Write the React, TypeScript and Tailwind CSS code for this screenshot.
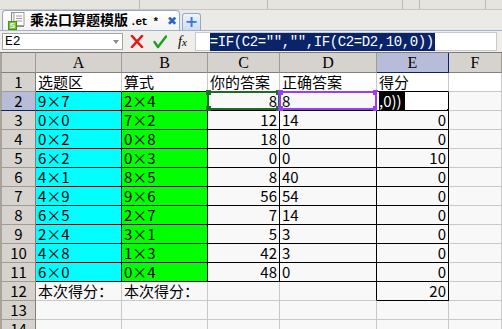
import React from "react";

const colA = ["9×7", "0×0", "0×2", "6×2", "4×1", "4×9", "6×5", "2×4", "4×8", "6×0"];
const colB = ["2×4", "7×2", "0×8", "0×3", "8×5", "9×6", "2×7", "3×1", "1×3", "0×4"];
const colC = ["8", "12", "18", "0", "8", "56", "7", "5", "42", "48"];
const colD = ["8", "14", "0", "0", "40", "54", "14", "3", "3", "0"];
const colE = ["", "0", "0", "10", "0", "0", "0", "0", "0", "0"];

const cellFont = { fontFamily: '"Noto Sans CJK SC", "Noto Sans", sans-serif' };

function Cell({
	children,
	className = "",
}: {
	children?: React.ReactNode;
	className?: string;
}) {
	return (
		<div
			className={`relative flex items-end whitespace-nowrap border-r border-b px-[2px] text-[15px] leading-[18px] text-black ${className}`}
			style={cellFont}
		>
			{children}
		</div>
	);
}

function RowHead({ n, active }: { n: number; active?: boolean }) {
	return (
		<div
			className={`flex items-center justify-center border-l-2 border-r border-b border-l-[#a8a49c] text-[15px] leading-[18px] text-black ${
				active
					? "bg-[#b7bcd9] border-b-[#0a246a] border-r-[#808080]"
					: "bg-[#d6d3ce] border-b-[#a09c94] border-r-[#808080]"
			}`}
			style={cellFont}
		>
			{n}
		</div>
	);
}

function ColHead({ label, active }: { label: string; active?: boolean }) {
	return (
		<div
			className={`flex items-end justify-center border-r border-b text-[16px] leading-[19px] text-black ${
				active
					? "bg-[#b7bcd9] border-r-[#0a246a] border-b-[#0a246a]"
					: "bg-[#d6d3ce] border-r-[#a09c94] border-b-[#808080]"
			}`}
			style={{ fontFamily: '"Liberation Serif", serif' }}
		>
			{label}
		</div>
	);
}

function Handles({ color }: { color: string }) {
	const dot = `absolute h-[5px] w-[5px] ${color}`;
	return (
		<>
			<span className={`${dot} -left-[3px] -top-[3px]`} />
			<span className={`${dot} -right-[3px] -top-[3px]`} />
			<span className={`${dot} -left-[3px] -bottom-[3px]`} />
			<span className={`${dot} -right-[3px] -bottom-[3px]`} />
		</>
	);
}

function SheetIcon() {
	return (
		<svg width="18" height="18" viewBox="0 0 18 18" className="shrink-0">
			<rect x="3.5" y="0.5" width="12" height="14" fill="#f4f4f4" stroke="#8a8a8a" />
			<rect x="6" y="0.5" width="10" height="13" fill="#fff" stroke="#9a9a9a" />
			<line x1="8" y1="4" x2="14" y2="4" stroke="#9a9a9a" />
			<line x1="8" y1="6.5" x2="14" y2="6.5" stroke="#9a9a9a" />
			<line x1="8" y1="9" x2="14" y2="9" stroke="#9a9a9a" />
			<rect x="0.5" y="9.5" width="8" height="8" fill="#7ac231" stroke="#4f8f1c" />
			<text x="4.5" y="16.3" fontSize="8" fontWeight="bold" textAnchor="middle" fill="#fff" fontFamily="Liberation Sans, sans-serif">
				S
			</text>
		</svg>
	);
}

export default function App() {
	const rows = Array.from({ length: 10 }, (_, i) => i);

	return (
		<div className="h-[329px] w-[502px] overflow-hidden bg-[#f7f7f7]">
			{/* toolbar remnant */}
			<div className="flex h-[10px] border-b border-[#c9c6bd] bg-[#e6e4de]">
				<div className="w-[140px] border-r border-[#bdbab2]" />
				<div className="w-[128px] border-r border-[#bdbab2]" />
				<div className="w-[135px] border-r border-[#bdbab2]" />
				<div className="w-[17px] border-r border-[#bdbab2]" />
				<div className="w-[66px] border-r border-[#bdbab2]" />
			</div>

			{/* tab bar */}
			<div className="flex h-[21px] items-end border-b border-[#9fb2cf] bg-[#ebeae6] pl-[2px]">
				<div className="flex h-[20px] w-[178px] items-center gap-[4px] whitespace-nowrap rounded-t-[4px] border border-b-0 border-[#93a9cb] bg-gradient-to-b from-white to-[#f3f3f3] pl-[5px]">
					<SheetIcon />
					<span
						className="text-[14px] font-bold leading-[16px] text-black"
						style={{ fontFamily: '"Noto Sans CJK SC", sans-serif' }}
					>
						乘法口算题模版
						<span className="ml-[2px] text-[11px] tracking-[-1px]" style={{ fontFamily: '"Liberation Mono", monospace' }}>
							.et *
						</span>
					</span>
					<span className="ml-[5px] text-[12px] font-bold leading-none text-[#2a64c8]" style={{ fontFamily: '"DejaVu Sans", sans-serif' }}>
						✖
					</span>
				</div>
				<div className="ml-[2px] flex h-[17px] w-[19px] items-center justify-center rounded-t-[3px] border border-b-0 border-[#93a9cb] bg-gradient-to-b from-[#eef4fc] to-[#cfdcf0]">
					<span className="text-[16px] font-bold leading-none text-[#3b78d8]" style={{ fontFamily: '"DejaVu Sans", sans-serif' }}>
						+
					</span>
				</div>
			</div>

			{/* formula bar */}
			<div className="flex h-[21px] items-center bg-[#efeeea] pl-[2px]">
				<div className="flex h-[17px] w-[121px] items-center justify-between border border-[#a6a6a6] bg-white pl-[2px] pr-[3px]">
					<span className="text-[13px] leading-none text-black" style={{ fontFamily: '"Liberation Mono", monospace' }}>
						E2
					</span>
					<span className="h-0 w-0 border-x-[3px] border-t-[4px] border-x-transparent border-t-[#8a8a8a]" />
				</div>
				<svg className="ml-[7px]" width="14" height="13" viewBox="0 0 14 13">
					<path d="M2 1 L12 12 M12 1 L2 12" stroke="#e01818" strokeWidth="2.6" strokeLinecap="round" />
				</svg>
				<svg className="ml-[9px]" width="14" height="14" viewBox="0 0 14 14">
					<path d="M1.5 7 L5 12 L13 1.5" stroke="#1aa21a" strokeWidth="2.4" fill="none" strokeLinecap="round" strokeLinejoin="round" />
				</svg>
				<span
					className="ml-[11px] text-[14px] italic leading-none text-black"
					style={{ fontFamily: '"Liberation Serif", serif' }}
				>
					f<span className="text-[11px]">x</span>
				</span>
				<div className="ml-[8px] flex h-[19px] w-[302px] items-center border border-[#c9c9c9] bg-white pl-[14px]">
					<span
						className="h-[18px] bg-[#0a246a] pr-[1px] text-[14px] leading-[18px] tracking-[-0.4px] text-white"
						style={{ fontFamily: '"Liberation Mono", monospace' }}
					>
						=IF(C2="","",IF(C2=D2,10,0))
					</span>
				</div>
			</div>

			{/* sheet grid */}
			<div className="grid grid-cols-[36px_86px_86px_72px_97px_72px_1fr] grid-rows-[20px_repeat(14,19px)] border-t border-[#7a7a7a]">
				<div className="border-l-2 border-r border-b border-l-[#a8a49c] border-r-[#a09c94] border-b-[#808080] bg-[#d6d3ce]" />
				<ColHead label="A" />
				<ColHead label="B" />
				<ColHead label="C" />
				<ColHead label="D" />
				<ColHead label="E" active />
				<ColHead label="F" />

				{/* row 1 */}
				<RowHead n={1} />
				<Cell className="bg-white border-r-[#c8c8c8] border-b-black">选题区</Cell>
				<Cell className="bg-white border-r-[#c8c8c8] border-b-black">算式</Cell>
				<Cell className="bg-white border-r-[#c8c8c8] border-b-black">你的答案</Cell>
				<Cell className="bg-white border-r-[#c8c8c8] border-b-black">正确答案</Cell>
				<Cell className="bg-white border-r-[#c8c8c8] border-b-black">得分</Cell>
				<Cell className="bg-white border-[#c8c8c8]" />

				{rows.map((i) => (
					<React.Fragment key={i}>
						<RowHead n={i + 2} active={i === 0} />
						<Cell className="bg-[#00ffff] border-black">{colA[i]}</Cell>
						<Cell className="bg-[#00ff00] border-black">{colB[i]}</Cell>
						<Cell className="justify-end bg-[#f8f8f8] border-black">
							{colC[i]}
							{i === 0 && (
								<span className="pointer-events-none absolute -left-[1px] -top-[1px] h-[19px] w-[73px] border-2 border-[#1d6b24]">
									<Handles color="bg-[#1d6b24]" />
								</span>
							)}
						</Cell>
						<Cell className="bg-[#f8f8f8] border-black">
							{colD[i]}
							{i === 0 && (
								<span className="pointer-events-none absolute -left-[1px] -top-[1px] h-[19px] w-[98px] border-2 border-[#9b3df0]">
									<Handles color="bg-[#9b3df0]" />
								</span>
							)}
						</Cell>
						{i === 0 ? (
							<Cell className="bg-white border-black">
								<span className="bg-black pr-[3px] text-white">,0))</span>
								<span className="absolute -bottom-[3px] -right-[3px] h-[4px] w-[4px] bg-black" />
							</Cell>
						) : (
							<Cell className="justify-end bg-[#f8f8f8] border-black">{colE[i]}</Cell>
						)}
						<Cell className="bg-[#f8f8f8] border-[#c8c8c8]" />
					</React.Fragment>
				))}

				{/* row 12 */}
				<RowHead n={12} />
				<Cell className="bg-[#f8f8f8] border-[#c8c8c8]">本次得分：</Cell>
				<Cell className="bg-[#f8f8f8] border-[#c8c8c8]">本次得分：</Cell>
				<Cell className="bg-[#f8f8f8] border-[#c8c8c8]" />
				<Cell className="bg-[#f8f8f8] border-[#c8c8c8] border-r-black" />
				<Cell className="justify-end bg-[#f8f8f8] border-black">20</Cell>
				<Cell className="bg-[#f8f8f8] border-[#c8c8c8]" />

				{[13, 14].map((n) => (
					<React.Fragment key={n}>
						<RowHead n={n} />
						{[0, 1, 2, 3, 4, 5].map((c) => (
							<Cell key={c} className="bg-[#f8f8f8] border-[#c8c8c8]" />
						))}
					</React.Fragment>
				))}
			</div>
		</div>
	);
}
